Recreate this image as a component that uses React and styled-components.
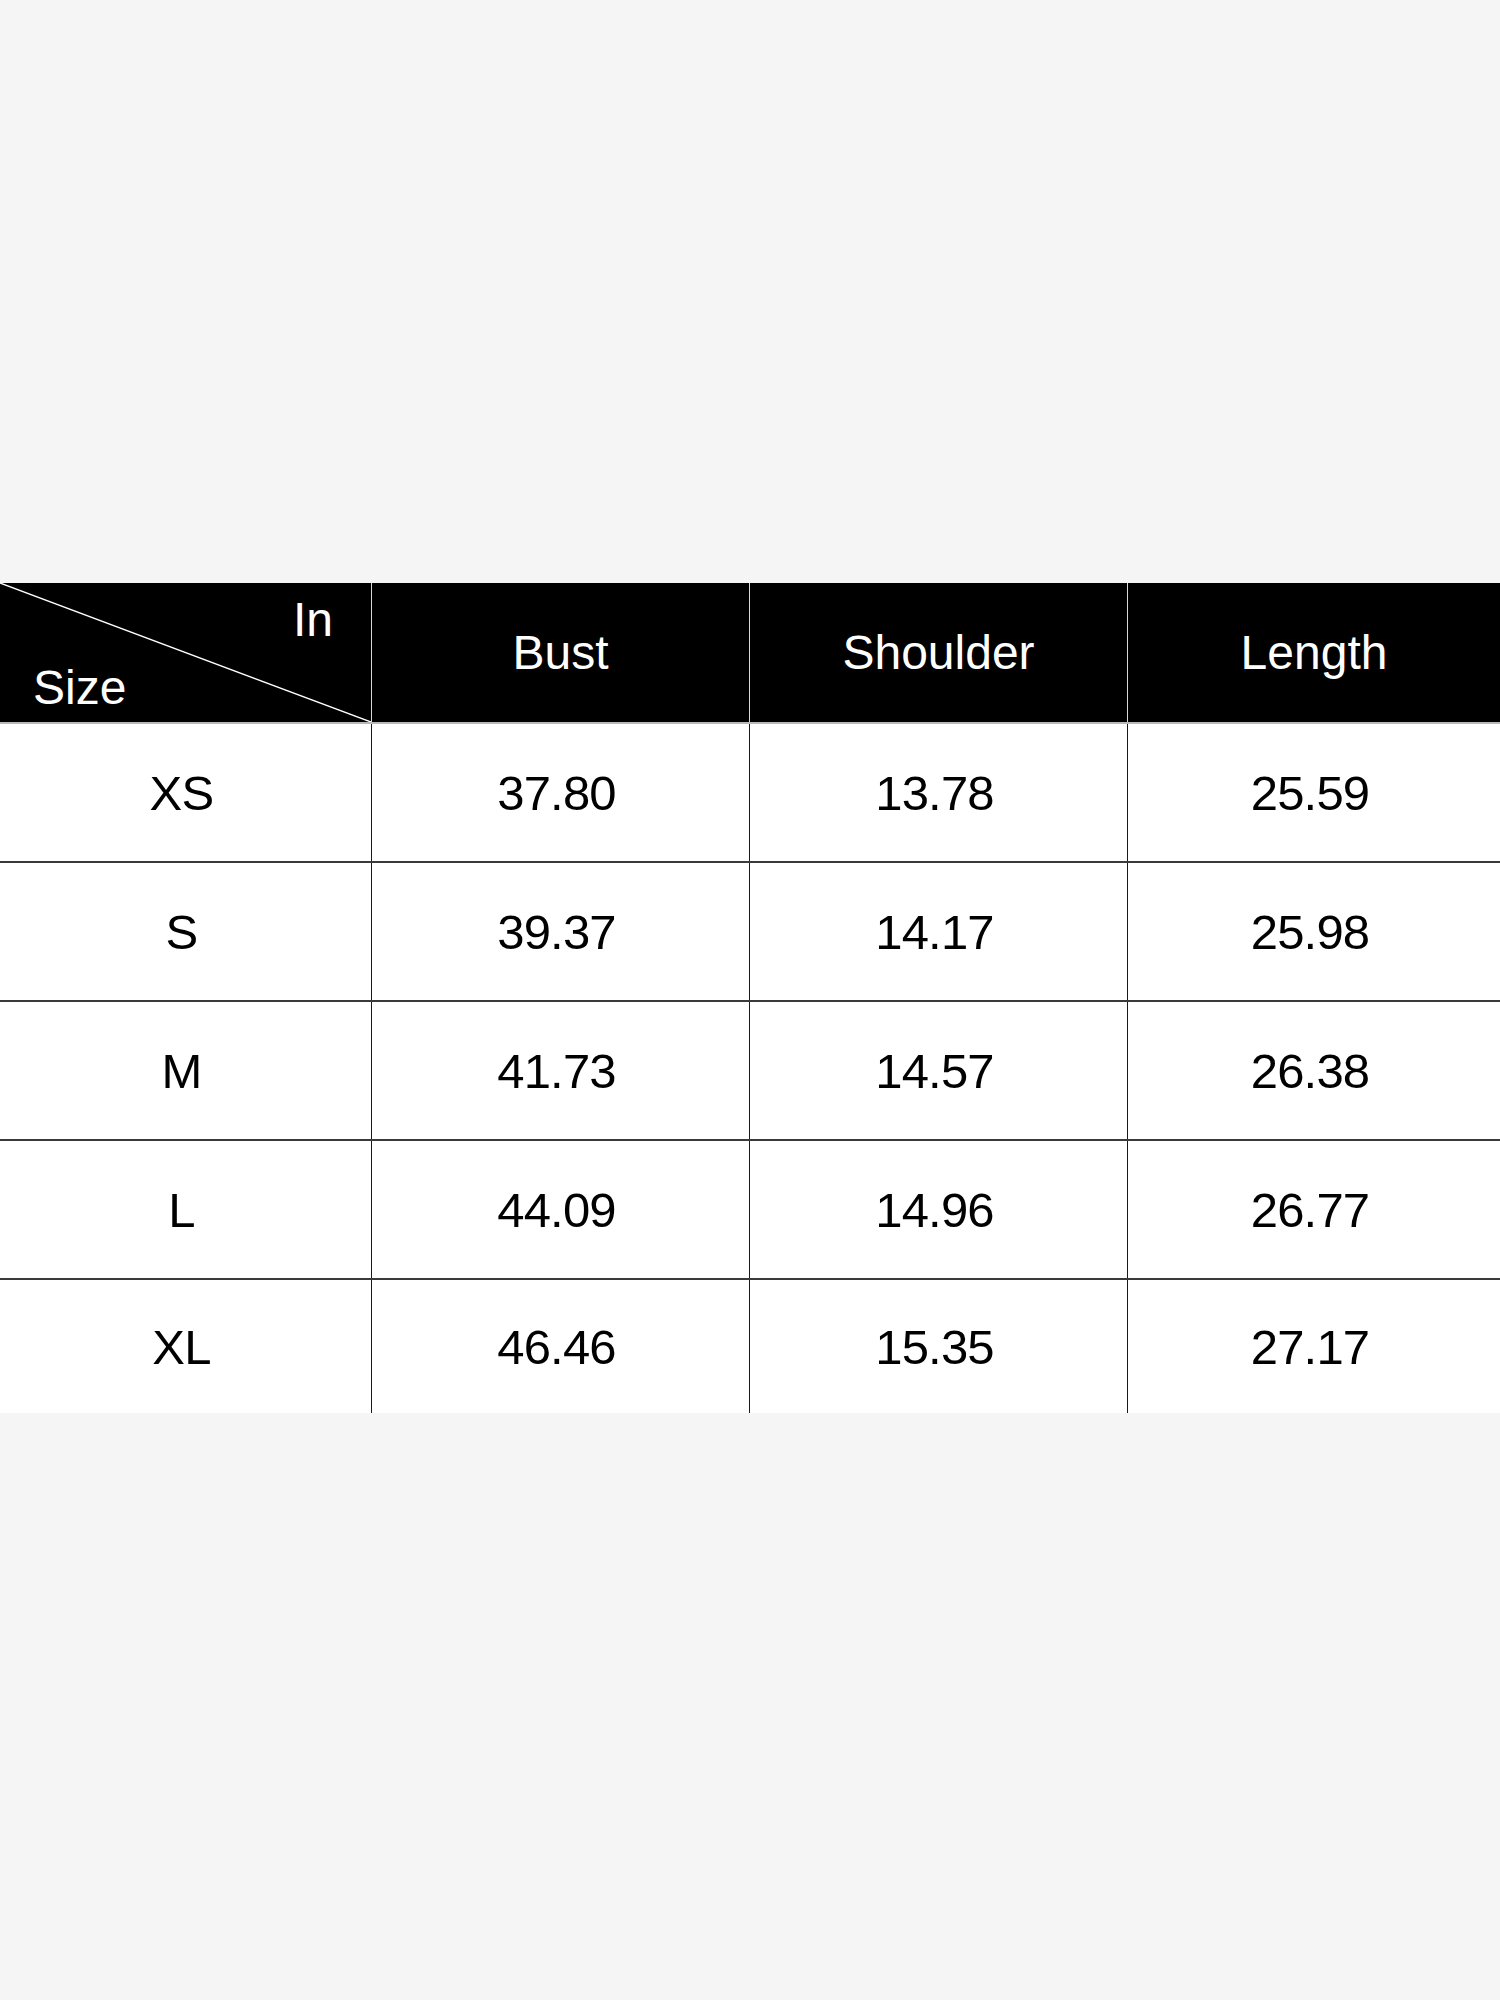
import React from "react";
import styled, { createGlobalStyle } from "styled-components";

const GlobalStyle = createGlobalStyle`
  html, body {
    margin: 0;
    padding: 0;
    background: #f5f5f5;
  }
`;

const COLS = "372px 378px 378px 1fr";

const rows = [
    ["XS", "37.80", "13.78", "25.59"],
    ["S", "39.37", "14.17", "25.98"],
    ["M", "41.73", "14.57", "26.38"],
    ["L", "44.09", "14.96", "26.77"],
    ["XL", "46.46", "15.35", "27.17"],
];

const App = () => {
    return (
        <>
            <GlobalStyle />
            <Page>
                <Table>
                    <HeaderRow>
                        <CornerCell>
                            <Diagonal viewBox="0 0 371 139" preserveAspectRatio="none">
                                <line x1="0" y1="0" x2="371" y2="139" stroke="#fff" strokeWidth="1.4" />
                            </Diagonal>
                            <CornerLabel $align="end">In</CornerLabel>
                            <CornerLabel $align="start">Size</CornerLabel>
                        </CornerCell>
                        <HeadCell>Bust</HeadCell>
                        <HeadCell>Shoulder</HeadCell>
                        <HeadCell $last>Length</HeadCell>
                    </HeaderRow>

                    {rows.map((r, i) => (
                        <BodyRow
                            key={r[0]}
                            $first={i === 0}
                            $height={i === rows.length - 1 ? 135 : 139}
                        >
                            {r.map((v, j) => (
                                <Cell key={j} $last={j === r.length - 1}>
                                    {v}
                                </Cell>
                            ))}
                        </BodyRow>
                    ))}
                </Table>
            </Page>
        </>
    );
};

export default App;

/* ================================
   STYLES
================================ */

const Page = styled.div`
  min-height: 2000px;
  padding-top: 583px;
  box-sizing: border-box;
  font-family: "Liberation Sans", Arial, sans-serif;
`;

const Table = styled.div`
  width: 1500px;
  display: flex;
  flex-direction: column;
`;

const HeaderRow = styled.div`
  display: grid;
  grid-template-columns: ${COLS};
  height: 139px;
  background: #000;
  color: #fff;
`;

const CornerCell = styled.div`
  position: relative;
  display: flex;
  flex-direction: column;
  justify-content: space-between;
  padding: 10px 38px 7px 33px;
  border-right: 1px solid #d8d8d8;
  box-sizing: border-box;
`;

const Diagonal = styled.svg`
  position: absolute;
  inset: 0;
  width: 100%;
  height: 100%;
`;

const CornerLabel = styled.span`
  position: relative;
  align-self: ${(p) => (p.$align === "end" ? "flex-end" : "flex-start")};
  font-size: 48px;
  line-height: 1.117;
`;

const HeadCell = styled.div`
  display: flex;
  align-items: center;
  justify-content: center;
  font-size: 48px;
  border-right: ${(p) => (p.$last ? "none" : "1px solid #d8d8d8")};
  box-sizing: border-box;
`;

const BodyRow = styled.div`
  display: grid;
  grid-template-columns: ${COLS};
  height: ${(p) => p.$height}px;
  background: #fff;
  box-sizing: border-box;
  border-top: ${(p) => (p.$first ? "2px solid #b8b8b8" : "2px solid #3a3a3a")};
`;

const Cell = styled.div`
  display: flex;
  align-items: center;
  justify-content: center;
  padding-right: 8px;
  font-size: 49px;
  letter-spacing: -0.8px;
  color: #000;
  border-right: ${(p) => (p.$last ? "none" : "1.5px solid #1a1a1a")};
  box-sizing: border-box;
`;
